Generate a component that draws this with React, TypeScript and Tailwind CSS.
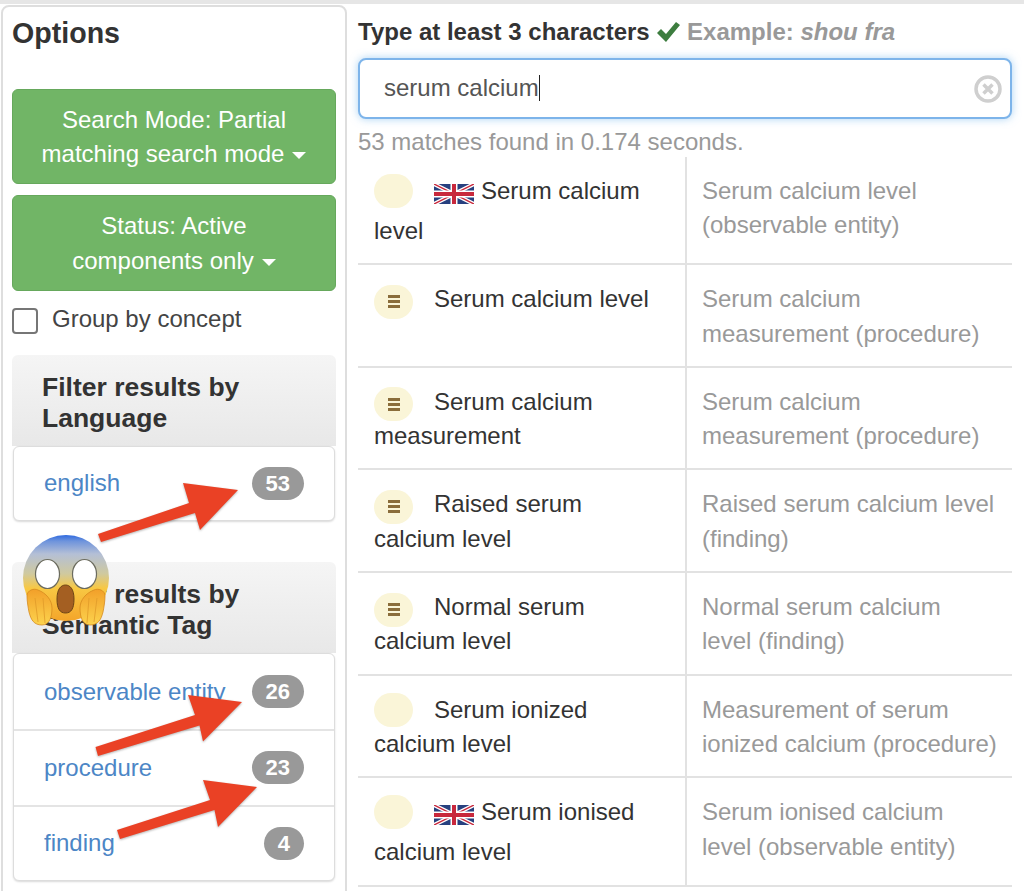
import React from 'react'

const results = [
  { name: 'Serum calcium level', desc: 'Serum calcium level (observable entity)', kind: 'flag' },
  { name: 'Serum calcium level', desc: 'Serum calcium measurement (procedure)', kind: 'bars' },
  { name: 'Serum calcium measurement', desc: 'Serum calcium measurement (procedure)', kind: 'bars' },
  { name: 'Raised serum calcium level', desc: 'Raised serum calcium level (finding)', kind: 'bars' },
  { name: 'Normal serum calcium level', desc: 'Normal serum calcium\nlevel (finding)', kind: 'bars' },
  { name: 'Serum ionized calcium level', desc: 'Measurement of serum ionized calcium (procedure)', kind: 'none' },
  { name: 'Serum ionised calcium level', desc: 'Serum ionised calcium\nlevel (observable entity)', kind: 'flag' },
]

function Flag() {
  return (
    <svg width="40" height="20" viewBox="0 0 40 20" className="inline-block align-[-15px] mb-[10px] mr-[7px]">
      <rect width="40" height="20" fill="#27407f" />
      <path d="M0 0 L40 20 M40 0 L0 20" stroke="#fff" strokeWidth="4" />
      <path d="M0 0 L40 20 M40 0 L0 20" stroke="#c8283c" strokeWidth="1.4" />
      <path d="M20 0 V20 M0 10 H40" stroke="#fff" strokeWidth="7" />
      <path d="M20 0 V20 M0 10 H40" stroke="#c8283c" strokeWidth="4" />
    </svg>
  )
}

function Pill({ bars }: { bars?: boolean }) {
  return (
    <span className="inline-flex items-center justify-center w-[39px] h-[34px] rounded-[17px] bg-[#faf5d8] align-[-1px] -my-[8px]">
      {bars && (
        <svg width="12" height="13" viewBox="0 0 12 13">
          <path d="M0 1.5 H12 M0 6.5 H12 M0 11.5 H12" stroke="#8a6d3b" strokeWidth="3" />
        </svg>
      )}
    </span>
  )
}

function Caret() {
  return <span className="inline-block ml-[8px] align-middle w-0 h-0 border-x-[7px] border-x-transparent border-t-[7px] border-t-white" />
}

function Panel({ title, items, rowHeight }: { title: string[]; items: { label: string; count: number }[]; rowHeight: string }) {
  return (
    <div className="mx-[9px]">
      <div className="h-[91px] pt-[17px] pl-[30px] rounded-t-md bg-gradient-to-b from-[#f5f5f5] to-[#e8e8e8] text-[26.5px] leading-[31px] font-bold text-[#333]">
        {title.map((t) => (
          <div key={t}>{t}</div>
        ))}
      </div>
      <div className="mx-px rounded-md border border-[#ddd] bg-white shadow-[0_1px_2px_rgba(0,0,0,0.15)]">
        {items.map((item, i) => (
          <div key={item.label} className={`${rowHeight} flex items-center justify-between px-[30px] ${i > 0 ? 'border-t-2 border-[#e4e4e4]' : ''}`}>
            <span className="text-[24px] text-[#4c86c6]">{item.label}</span>
            <span className="h-[33px] px-[14px] rounded-full bg-[#999] text-white font-bold text-[22px] leading-[33px]">{item.count}</span>
          </div>
        ))}
      </div>
    </div>
  )
}

export default function App() {
  return (
    <div className="relative w-[1024px] h-[891px] overflow-hidden bg-white font-['Liberation_Sans',Arial,sans-serif] text-[24px] leading-[34.3px] text-[#333]">
      <div className="h-[4px] bg-[#e6e6e6]" />
      <div className="flex">
        <aside className="mt-px ml-[1px] w-[346px] h-[900px] rounded-t-lg border-2 border-[#dedede]">
          <h3 className="pl-[9px] pt-[9px] text-[28.6px] leading-[34px] font-bold text-[#333]">Options</h3>
          <div className="mx-[9px] mt-[39px] flex flex-col gap-[11px]">
            <button className="h-[95px] pt-px rounded-md border border-[#66a85c] bg-[#71b566] text-white text-center">
              Search Mode: Partial<br />matching search mode<Caret />
            </button>
            <button className="h-[96px] pt-px rounded-md border border-[#66a85c] bg-[#71b566] text-white text-center">
              Status: Active<br />components only<Caret />
            </button>
          </div>
          <label className="flex items-center h-[34px] mx-[9px] mt-[12px] text-[#444]">
            <span className="w-[26px] h-[26px] mr-[14px] mt-[2px] rounded-[4px] border-2 border-[#767676] bg-white" />
            <span className="-mt-[2px]">Group by concept</span>
          </label>
          <div className="mt-[18px]">
            <Panel title={['Filter results by', 'Language']} rowHeight="h-[73px]" items={[{ label: 'english', count: 53 }]} />
          </div>
          <div className="mt-[41px]">
            <Panel
              title={['Filter results by', 'Semantic Tag']}
              rowHeight="h-[75.33px]"
              items={[
                { label: 'observable entity', count: 26 },
                { label: 'procedure', count: 23 },
                { label: 'finding', count: 4 },
              ]}
            />
          </div>
        </aside>

        <main className="ml-[11px] w-[654px]">
          <div className="mt-[11px] h-[34px] text-[24px] font-bold whitespace-nowrap">
            Type at least 3 characters{' '}
            <svg width="24" height="22" viewBox="0 0 24 22" className="inline-block align-[-3px]">
              <path d="M1 12 L5 8 L10 13 L20 1 L24 4 L10 21 Z" fill="#3d7d3f" />
            </svg>{' '}
            <span className="text-[#999]">
              Example: <em>shou fra</em>
            </span>
          </div>
          <div className="mt-[9px] h-[61px] flex items-center justify-between pl-[24px] pr-[8px] rounded-lg border-2 border-[#7db4ea] bg-white shadow-[0_0_9px_rgba(102,175,233,0.55)] text-[#555]">
            <span>
              serum calcium<span className="inline-block w-px h-[26px] bg-[#222] align-[-5px]" />
            </span>
            <svg width="28" height="28" viewBox="0 0 28 28">
              <circle cx="14" cy="14" r="12" fill="none" stroke="#cfcfcf" strokeWidth="3.5" />
              <path d="M9.5 9.5 L18.5 18.5 M18.5 9.5 L9.5 18.5" stroke="#cfcfcf" strokeWidth="3.5" />
            </svg>
          </div>
          <p className="mt-[6px] h-[32px] text-[#999]">53 matches found in 0.174 seconds.</p>

          {results.map((r, i) => (
            <div key={i} className="grid grid-cols-[329px_1fr] border-b-2 border-[#e2e2e2]">
              <div className="pl-[16px] pr-[20px] pt-[17px] pb-[15px] border-r-2 border-[#e2e2e2]">
                <Pill bars={r.kind === 'bars'} />
                <span className="inline-block w-[21px]" />
                {r.kind === 'flag' && <Flag />}
                {r.name}
              </div>
              <div className="pl-[15px] pr-[12px] pt-[17px] pb-[15px] text-[#999] whitespace-pre-line">{r.desc}</div>
            </div>
          ))}
        </main>
      </div>

      {/* arrows and the emoji sit over the sidebar */}
      <svg className="absolute left-0 top-0 pointer-events-none" width="1024" height="891" viewBox="0 0 1024 891">
        <defs>
          <linearGradient id="face" x1="0" y1="0" x2="0" y2="1">
            <stop offset="0" stopColor="#2f6ae0" />
            <stop offset="0.07" stopColor="#6d93dc" />
            <stop offset="0.22" stopColor="#b4bfd6" />
            <stop offset="0.45" stopColor="#cfc99f" />
            <stop offset="0.62" stopColor="#f8c843" />
            <stop offset="1" stopColor="#f4a52a" />
          </linearGradient>
          <linearGradient id="hand" x1="0" y1="0" x2="0" y2="1">
            <stop offset="0" stopColor="#f2a02a" />
            <stop offset="1" stopColor="#fcd34d" />
          </linearGradient>
        </defs>
        <g fill="#ea4125" style={{ filter: 'drop-shadow(0 1px 1px rgba(0,0,0,0.3))' }}>
          <polygon points="98,534 189,503 183,483 238,490 200,530 195,513 101,542" />
          <polygon points="95.5,747 195,715 188,695 242,702 203,741.5 199.5,725.5 98,756" />
          <polygon points="117,830 210,800 203,780 257,787 218,827 214.5,810 120,839" />
        </g>
        <circle cx="66" cy="578" r="43" fill="url(#face)" />
        <ellipse cx="47.5" cy="574" rx="12" ry="14.5" fill="#fff" stroke="#6b6b5e" strokeWidth="1.2" />
        <ellipse cx="84.5" cy="574" rx="12" ry="14.5" fill="#fff" stroke="#6b6b5e" strokeWidth="1.2" />
        <path d="M57 599 C57 589 61 585 65.5 585 C70 585 74 589 74 599 C74 609 71 613 65.5 613 C60 613 57 609 57 599 Z" fill="#a45f22" stroke="#6d4415" strokeWidth="1" />
        <path d="M27 596 C27 590 34 588 38 590 C46 593 52 600 52 608 C52 616 50 625 42 625 C34 625 31 620 29 612 C28 607 27 601 27 596 Z" fill="url(#hand)" stroke="#d58a1e" strokeWidth="0.8" />
        <path d="M105 596 C105 590 98 588 94 590 C86 593 80 600 80 608 C80 616 82 625 90 625 C98 625 101 620 103 612 C104 607 105 601 105 596 Z" fill="url(#hand)" stroke="#d58a1e" strokeWidth="0.8" />
        <path d="M35 598 L38 622 M43 598 L45 623 M97 598 L94 622 M89 598 L87 623" stroke="#e09a2a" strokeWidth="0.8" fill="none" />
      </svg>
    </div>
  )
}
